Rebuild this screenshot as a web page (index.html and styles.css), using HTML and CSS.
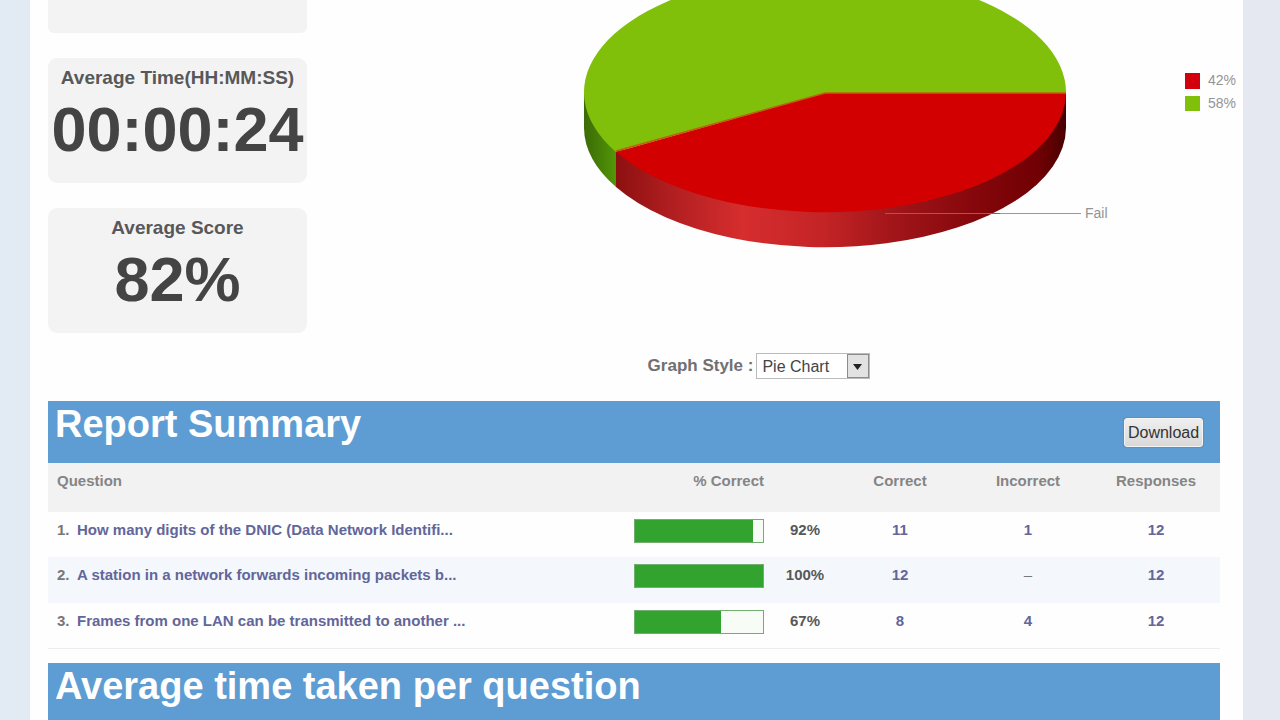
FILE: index.html
```html
<!DOCTYPE html>
<html lang="en">
<head>
<meta charset="utf-8">
<title>Report Summary</title>
<link rel="stylesheet" href="styles.css">
</head>
<body>
<main class="page">
  <section class="overview">
    <div class="stats">
      <div class="stat stat-cut"></div>
      <div class="stat">
        <div class="stat-label">Average Time(HH:MM:SS)</div>
        <div class="stat-value">00:00:24</div>
      </div>
      <div class="stat">
        <div class="stat-label">Average Score</div>
        <div class="stat-value">82%</div>
      </div>
    </div>
    <div class="chart">
      <svg class="pie" viewBox="307 0 936 340" role="img" aria-label="Pass and fail share">
        <defs>
          <linearGradient id="redSide" gradientUnits="userSpaceOnUse" x1="616" y1="0" x2="1066" y2="0">
            <stop offset="0" stop-color="#8c1010"/>
            <stop offset="0.12" stop-color="#b01e20"/>
            <stop offset="0.28" stop-color="#d62d2e"/>
            <stop offset="0.46" stop-color="#c42426"/>
            <stop offset="0.62" stop-color="#a01519"/>
            <stop offset="0.8" stop-color="#85070b"/>
            <stop offset="0.94" stop-color="#700003"/>
            <stop offset="1" stop-color="#480002"/>
          </linearGradient>
          <linearGradient id="greenSide" gradientUnits="userSpaceOnUse" x1="584" y1="0" x2="616" y2="0">
            <stop offset="0" stop-color="#3c6b06"/>
            <stop offset="0.5" stop-color="#468006"/>
            <stop offset="1" stop-color="#529708"/>
          </linearGradient>
        </defs>
        <path fill="url(#greenSide)" d="M584 93V128A241 120 0 0 0 616 187V145Z"/>
        <path fill="url(#redSide)" d="M616 151L825 120L1066 93V128A241 120 0 0 1 616 187Z"/>
        <path fill="#80c00a" d="M825 93L616 152A241 120 0 1 1 1066 93Z"/>
        <path fill="#d20000" d="M825 93H1066A241 120 0 0 1 616 152Z"/>
        <path fill="none" stroke="#bd6405" stroke-width="1.500" d="M616 151L825 93H1066"/>
        <path stroke="#b85050" d="M885 213.500H1000"/>
        <path stroke="#999" d="M1000 213.500H1081"/>
        <text class="pie-text" x="1085" y="218">Fail</text>
        <rect x="1185" y="73" width="15" height="16" fill="#d2000f"/>
        <text class="pie-text" x="1208" y="85">42%</text>
        <rect x="1185" y="96" width="15" height="15" fill="#80c00a"/>
        <text class="pie-text" x="1208" y="108">58%</text>
      </svg>
      <div class="style-row">
        <label for="graph-style">Graph Style :</label>
        <div class="picker">
          <select id="graph-style">
            <option>Pie Chart</option>
            <option>Bar Chart</option>
          </select>
          <svg class="picker-arrow" viewBox="0 0 22 24" aria-hidden="true">
            <rect x="0.500" y="0.500" width="21" height="23" fill="#e2e2e2" stroke="#8c8c8c"/>
            <path d="M6 10h9l-4.500 6z" fill="#222"/>
          </svg>
        </div>
      </div>
    </div>
  </section>

  <section class="report">
    <header class="band">
      <h2>Report Summary</h2>
      <button class="download" type="button">Download</button>
    </header>
    <table class="results">
      <colgroup>
        <col>
        <col class="col-bar">
        <col class="col-pct">
        <col class="col-num">
        <col class="col-num">
        <col class="col-num">
      </colgroup>
      <thead>
        <tr>
          <th class="left">Question</th>
          <th class="right">% Correct</th>
          <th></th>
          <th>Correct</th>
          <th>Incorrect</th>
          <th>Responses</th>
        </tr>
      </thead>
      <tbody>
        <tr>
          <td class="left"><span class="num">1.</span><a href="#q1">How many digits of the DNIC (Data Network Identifi...</a></td>
          <td class="bar-cell"><div class="bar"><div class="fill" style="width:92%"></div></div></td>
          <td class="pct">92%</td>
          <td><a href="#q1">11</a></td>
          <td><a href="#q1">1</a></td>
          <td><a href="#q1">12</a></td>
        </tr>
        <tr class="alt">
          <td class="left"><span class="num">2.</span><a href="#q2">A station in a network forwards incoming packets b...</a></td>
          <td class="bar-cell"><div class="bar"><div class="fill" style="width:100%"></div></div></td>
          <td class="pct">100%</td>
          <td><a href="#q2">12</a></td>
          <td class="none">–</td>
          <td><a href="#q2">12</a></td>
        </tr>
        <tr>
          <td class="left"><span class="num">3.</span><a href="#q3">Frames from one LAN can be transmitted to another ...</a></td>
          <td class="bar-cell"><div class="bar"><div class="fill" style="width:67%"></div></div></td>
          <td class="pct">67%</td>
          <td><a href="#q3">8</a></td>
          <td><a href="#q3">4</a></td>
          <td><a href="#q3">12</a></td>
        </tr>
      </tbody>
    </table>
  </section>

  <section class="timing">
    <header class="band band-end">
      <h2>Average time taken per question</h2>
    </header>
  </section>
</main>
</body>
</html>
```
FILE: styles.css
```css
* {
  box-sizing: border-box;
}

body {
  margin: 0;
  background: linear-gradient(to right, #e2eaf3, #e5e8f1);
  font-family: "Liberation Sans", Arial, sans-serif;
  color: #444;
}

.page {
  margin: 0 37px 0 30px;
  min-height: 100vh;
  background: #fefefe;
}

.overview {
  display: flex;
  padding-left: 18px;
  min-height: 401px;
}

.stats {
  display: flex;
  flex-direction: column;
  gap: 25px;
  flex: 0 0 259px;
}

.stat {
  min-height: 125px;
  padding-top: 8px;
  border-radius: 9px;
  background: #f3f3f3;
  text-align: center;
}

.stat-cut {
  min-height: 33px;
  border-radius: 0 0 6px 6px;
}

.stat-label {
  font-size: 19px;
  font-weight: bold;
  line-height: 24px;
  color: #585858;
}

.stat-value {
  font-size: 63px;
  font-weight: bold;
  line-height: 78px;
  color: #444;
}

.chart {
  flex: 1;
  min-width: 0;
}

.pie {
  display: block;
  width: 100%;
}

.pie-text {
  font-size: 14px;
  fill: #949494;
}

.style-row {
  display: flex;
  justify-content: center;
  align-items: center;
  gap: 3px;
  padding: 12px 32px 0 0;
}

.style-row label {
  font-size: 17px;
  font-weight: bold;
  line-height: 28px;
  color: #707070;
}

.picker {
  position: relative;
}

.picker select {
  display: block;
  width: 114px;
  height: 26px;
  padding: 0 5px;
  border: 1px solid #bbb;
  border-radius: 0;
  appearance: none;
  background: #fff;
  font: 16px "Liberation Sans", Arial, sans-serif;
  color: #444;
}

.picker-arrow {
  position: absolute;
  top: 1px;
  right: 1px;
  width: 22px;
  height: 24px;
  pointer-events: none;
}

.report,
.timing {
  padding: 0 23px 0 18px;
}

.band {
  display: flex;
  justify-content: space-between;
  align-items: flex-start;
  height: 62px;
  padding: 0 17px 0 7px;
  background: #5d9dd3;
}

.band-end {
  height: 57px;
}

.band h2 {
  margin: 0;
  font-size: 38px;
  line-height: 46px;
  color: #fff;
}

.download {
  margin-top: 17px;
  width: 79px;
  height: 29px;
  padding: 0;
  border: 1px solid #f4f4f4;
  border-radius: 3px;
  background: linear-gradient(#efefef, #d9d9d9);
  box-shadow: 0 0 1px 1px #6d8cab;
  font: 16px "Liberation Sans", Arial, sans-serif;
  color: #333;
}

.results {
  width: 100%;
  margin-bottom: 14px;
  border-collapse: collapse;
  table-layout: fixed;
  border-bottom: 1px solid #eee;
  font-size: 15px;
  font-weight: bold;
  line-height: 20px;
}

.col-bar {
  width: 130px;
}

.col-pct {
  width: 72px;
}

.col-num {
  width: 128px;
}

.results th,
.results td {
  height: 45px;
  padding: 8px 0 0;
  vertical-align: top;
  text-align: center;
}

.results th {
  height: 49px;
  background: #f2f2f2;
  color: #858585;
}

.results .left {
  padding-left: 9px;
  text-align: left;
  white-space: nowrap;
}

.results .right {
  text-align: right;
}

.results .alt td {
  height: 46px;
  background: #f4f8fd;
}

.results .bar-cell {
  padding-top: 7px;
}

.results .pct {
  padding-left: 10px;
  color: #585858;
}

.results .none {
  font-weight: normal;
  color: #777;
}

.results a {
  color: #62669a;
  text-decoration: none;
}

.num {
  display: inline-block;
  width: 20px;
  color: #777;
}

.bar {
  height: 24px;
  border: 1px solid #74ad70;
  background: #f8fcf6;
}

.fill {
  height: 100%;
  background: #32a32e;
}
```
